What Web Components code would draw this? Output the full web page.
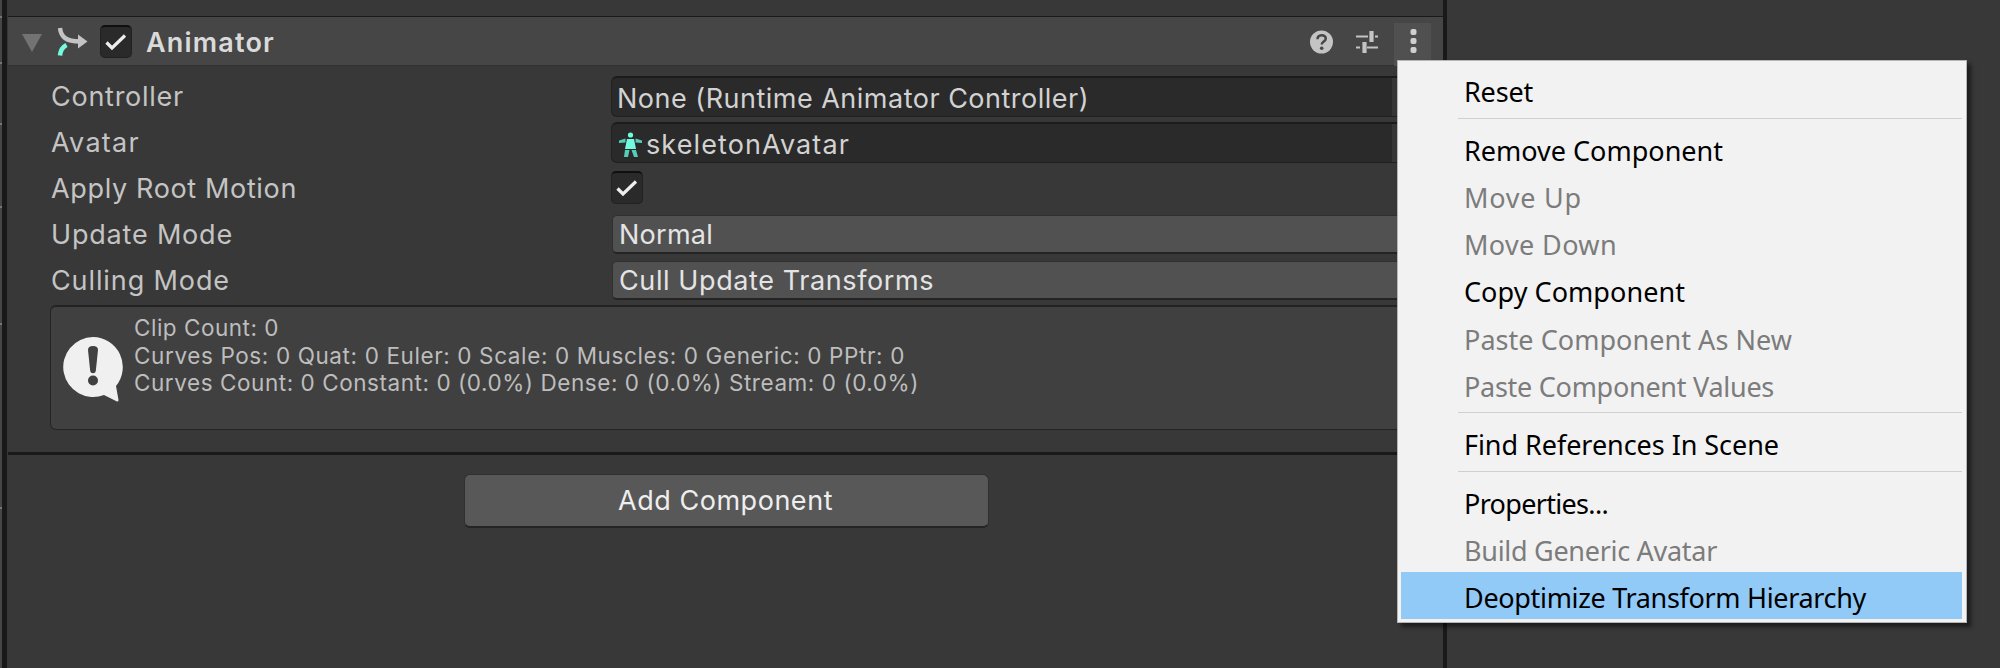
<!DOCTYPE html>
<html lang="en"><head><meta charset="utf-8"><title>Inspector</title>
<style>html,body{margin:0;height:100%;background:#383838;overflow:hidden}</style></head>
<body><inspector-window></inspector-window>
<script>
const define=(name,html,setup)=>customElements.define(name,class extends HTMLElement{
  connectedCallback(){
    if(this.shadowRoot)return;
    const t=document.createElement('template');t.innerHTML=html;
    this.attachShadow({mode:'open'}).append(t.content.cloneNode(true));
    if(setup)setup(this,this.shadowRoot);
  }});

// A single line of text whose tracking is adjusted to a given width.
define('fit-text','<style>:host{display:block;white-space:pre}span{display:inline-block}</style><span><slot></slot></span>',(el,root)=>{
  const s=root.querySelector('span');
  const n=root.querySelector('slot').assignedNodes({flatten:true}).map(x=>x.textContent).join('').length;
  const w=s.getBoundingClientRect().width;
  s.style.letterSpacing=((+el.getAttribute('w')+2-w)/n).toFixed(3)+'px';
});

define('check-box',`<style>:host{display:block;width:32px;height:33px;box-sizing:border-box;background:#2a2a2a;border:1px solid #212121;border-top:2px solid #0f0f0f;border-radius:5px}svg{display:block}</style>
<svg width="30" height="30" viewBox="0 0 30 30"><path d="M5.500 15.500l5.500 5.500L24 8.500" fill="none" stroke="#eee" stroke-width="3.200"/></svg>`);

define('component-header',`<style>
:host{display:flex;align-items:flex-start;height:50px;box-sizing:border-box;background:#464646;border-top:1.500px solid #1a1a1a;border-bottom:1px solid #303030;font:600 27px/32px Inter,sans-serif;color:#dadada;padding-left:14px}
svg{display:block;flex:none}.fold{margin:17px 0 0}.anim{margin:9px 0 0 13px}check-box{margin:8px 0 0 11px}
.title{margin:10px 0 0 14px;flex:1}.help{margin-top:13px}.preset{margin:13px 0 0 21px}
.more{width:37px;height:43px;margin:6px 12px 0 15px;background:#505050}
</style>
<svg class="fold" width="20" height="18"><path d="M0 0h20L10 18z" fill="#737373"/></svg>
<svg class="anim" width="34" height="32" viewBox="56 26 34 32"><path d="M61 28C62 37 67 41.500 81 41.500" fill="none" stroke="#c4c4c4" stroke-width="4.400"/><path d="M79 34.500l9.500 7-9.500 7z" fill="#c4c4c4"/><path d="M61 55.500C61.500 50 63.500 47 67.500 45" fill="none" stroke="#73fbe0" stroke-width="4.600"/></svg>
<check-box></check-box><fit-text class="title" w="127"><slot></slot></fit-text>
<svg class="help" width="24" height="24"><circle cx="11.500" cy="12" r="11.500" fill="#c4c4c4"/><path d="M7.500 9.200C7.500 3.800 15.800 4 15.800 8.600c0 3-4.100 3-4.100 6" fill="none" stroke="#464646" stroke-width="2.500"/><circle cx="11.700" cy="18.300" r="1.800" fill="#464646"/></svg>
<svg class="preset" width="24" height="24" viewBox="1356 30 24 24"><path d="M1357 36.500h12M1376 36.500h3M1357 47.500h4M1368 47.500h11" stroke="#c4c4c4" stroke-width="2"/><path d="M1372.500 31v11M1365.500 42v11" stroke="#c4c4c4" stroke-width="4.200"/></svg>
<svg class="more" viewBox="0 0 37 43"><g fill="#d0d0d0"><rect x="16.500" y="6" width="6" height="6" rx="2"/><rect x="16.500" y="15" width="6" height="6" rx="2"/><rect x="16.500" y="24" width="6" height="6" rx="2"/></g></svg>`);

define('property-row',`<style>:host{display:flex;height:46px;align-items:flex-start;font:400 27px/32px Inter,sans-serif;color:#c4c4c4}.label{width:560px;flex:none;padding-top:5px}</style>
<fit-text class="label"></fit-text><slot></slot>`,(el,root)=>{
  const l=root.querySelector('fit-text'),t=l.cloneNode();t.textContent=el.getAttribute('label');t.setAttribute('w',el.getAttribute('lw'));l.replaceWith(t);
});

define('object-field',`<style>:host{display:flex;flex:1;height:41px;box-sizing:border-box;background:#2a2a2a;border:1px solid #202020;border-top:2px solid #1b1b1b;border-right:0;border-radius:6px;color:#d2d2d2;overflow:hidden}
.content{display:flex;flex:1;padding:5px 0 0 5px}.pick{width:51px;background:#373737}</style><div class="content"><slot></slot></div><div class="pick"></div>`);

define('avatar-icon',`<style>:host{display:block;width:25px;height:26px;margin:2.500px 3px 0 1px}svg{display:block}</style>
<svg width="25" height="26"><g fill="#73fbe0"><circle cx="12.500" cy="3" r="2.600"/><path d="M9 7h7l2 10H7z"/></g><g fill="#55cdb8"><path d="M7.500 6.500v4L1 11V8.500zM17.500 6.500v4L24 11V8.500zM7 18h4.500L10 25H6zM13.500 18H18l2 7h-4z"/></g></svg>`);

define('drop-down',`<style>:host{display:block;flex:1;height:39px;box-sizing:border-box;margin:1px 0 0 1px;background:#515151;border:1px solid #303030;border-bottom:2px solid #242424;border-radius:5px;color:#e4e4e4;padding:3px 0 0 6px}</style><slot></slot>`);

define('help-box',`<style>:host{display:flex;height:125px;box-sizing:border-box;background:#404040;border:1px solid #232323;border-top-width:2px;border-radius:6px;font:400 22.500px/27.700px Inter,sans-serif;color:#bdbdbd;padding:7px 0 0 11px}
svg{display:block;margin:22px 11px 0 0;flex:none}</style>
<svg width="61" height="67" viewBox="62 336 61 67"><path d="M93 337a30 30 0 1 0 11 58l12.500 6.300q2 .6 2-1.400l-2.500-13.900A30 30 0 0 0 93 337z" fill="#f0f0f0"/><path d="M88 350q0-4 5-4t5 4l-2.200 21q-.3 2.200-2.800 2.200t-2.800-2.200z" fill="#404040"/><circle cx="93" cy="380.500" r="5" fill="#404040"/></svg>
<div><slot></slot></div>`);

define('menu-item',`<style>:host{display:block;height:47.300px;box-sizing:border-box;line-height:47.300px;padding:2.600px 0 0 63px;color:#000}:host([disabled]){color:#7c7c7c}:host([active]){background:#91c9f7}</style><slot></slot>`);
define('menu-separator',`<style>:host{display:block;height:11px;box-sizing:border-box;padding:4.500px 0 0 57px}div{height:1px;background:#d0d0d0}</style><div></div>`);
define('context-menu',`<style>:host{display:block;position:absolute;left:1397px;top:60px;width:570px;height:563px;box-sizing:border-box;border:1px solid #b5b5b5;background:#f2f2f2;padding:8px 4px 3px 3px;box-shadow:4px 4px 4px rgba(0,0,0,.5);font:400 27px "Noto Sans",sans-serif}</style><slot></slot>`);

define('inspector-window',`<style>
:host{display:flex;height:668px;width:2000px;position:relative;background:#383838;overflow:hidden}
.edge{width:2px;background:#464646;display:grid;grid-template-rows:18px 46px 61px 83px 117px 184px;align-content:start}.edge i{height:2px;background:#777;align-self:end}
.bar{width:5px;background:#191919;margin-right:1px}
.panel{width:1435px;display:flex;flex-direction:column}.top{height:16px}
.rows{padding:10px 0 0 43px;height:229px;box-sizing:border-box}
property-row check-box{margin-top:3px}
help-box{margin:10px 6px 0 42px}
.line{height:3px;background:#191919;margin-top:22px}
.right{width:4px;background:#191919}
.add{width:525px;height:54px;box-sizing:border-box;margin:19px 0 0 456px;background:#585858;border:1px solid #303030;border-bottom:2px solid #242424;border-radius:6px;font:400 27px/52px Inter,sans-serif;color:#eee;padding-left:153px}
</style>
<div class="edge"><i></i><i></i><i></i><i></i><i></i><i></i></div><div class="bar"></div>
<div class="panel"><div class="top"></div>
<component-header>Animator</component-header>
<div class="rows">
<property-row label="Controller" lw="131"><object-field><fit-text w="470">None (Runtime Animator Controller)</fit-text></object-field></property-row>
<property-row label="Avatar" lw="87"><object-field><avatar-icon></avatar-icon><fit-text w="202">skeletonAvatar</fit-text></object-field></property-row>
<property-row label="Apply Root Motion" lw="244"><check-box></check-box></property-row>
<property-row label="Update Mode" lw="180"><drop-down><fit-text w="92">Normal</fit-text></drop-down></property-row>
<property-row label="Culling Mode" lw="177"><drop-down><fit-text w="313">Cull Update Transforms</fit-text></drop-down></property-row>
</div>
<help-box><fit-text w="143">Clip Count: 0</fit-text><fit-text w="769">Curves Pos: 0 Quat: 0 Euler: 0 Scale: 0 Muscles: 0 Generic: 0 PPtr: 0</fit-text><fit-text w="783">Curves Count: 0 Constant: 0 (0.0%) Dense: 0 (0.0%) Stream: 0 (0.0%)</fit-text></help-box>
<div class="line"></div>
<div class="add"><fit-text w="213">Add Component</fit-text></div>
</div><div class="right"></div>
<context-menu>
<menu-item style="height:44px;line-height:46px;padding-top:0"><fit-text w="67">Reset</fit-text></menu-item><menu-separator></menu-separator>
<menu-item><fit-text w="257">Remove Component</fit-text></menu-item>
<menu-item disabled><fit-text w="116">Move Up</fit-text></menu-item>
<menu-item disabled><fit-text w="151">Move Down</fit-text></menu-item>
<menu-item><fit-text w="219">Copy Component</fit-text></menu-item>
<menu-item disabled><fit-text w="326">Paste Component As New</fit-text></menu-item>
<menu-item disabled><fit-text w="308">Paste Component Values</fit-text></menu-item><menu-separator></menu-separator>
<menu-item><fit-text w="313">Find References In Scene</fit-text></menu-item><menu-separator></menu-separator>
<menu-item><fit-text w="142">Properties...</fit-text></menu-item>
<menu-item disabled><fit-text w="251">Build Generic Avatar</fit-text></menu-item>
<menu-item active><fit-text w="400">Deoptimize Transform Hierarchy</fit-text></menu-item>
</context-menu>`);
</script></body></html>
